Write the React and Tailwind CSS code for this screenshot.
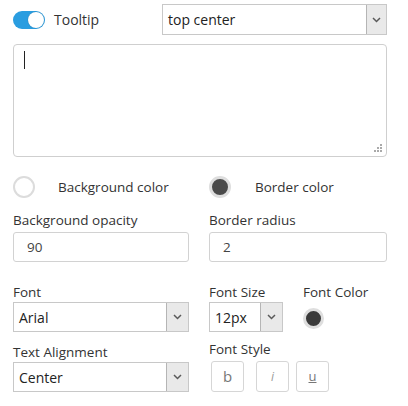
import React from "react";

const font = { fontFamily: '"Open Sans", "Liberation Sans", sans-serif' };

function Chevron() {
  return (
    <svg width="9" height="6" viewBox="0 0 9 6" fill="none">
      <path d="M1 1 L4.5 4.5 L8 1" stroke="#5a5a5a" strokeWidth="1.5" />
    </svg>
  );
}

function Select({ value, className, arrowClass = "w-[21px]" }) {
  return (
    <div className={`flex border border-[#c8c8c8] bg-white ${className}`}>
      <div className="flex-1 flex items-center pl-[5px] text-[14px] text-[#222]">{value}</div>
      <div className={`${arrowClass} flex items-center justify-center bg-[#e9e9e9] border-l border-[#b5b5b5]`}>
        <Chevron />
      </div>
    </div>
  );
}

function Label({ children, className = "" }) {
  return <div className={`h-[20px] leading-[20px] text-[13.5px] text-[#333] ${className}`}>{children}</div>;
}

function Input({ value }) {
  return (
    <div className="h-[30px] flex items-center pl-[13px] border border-[#d2d2d2] rounded-[3px] text-[13.5px] text-[#444] bg-white">
      {value}
    </div>
  );
}

function StyleButton({ children, className = "" }) {
  return (
    <div className={`w-[33px] h-[31px] flex items-center justify-center border border-[#d6d6d6] rounded-[3px] bg-white text-[#777] ${className}`}>
      {children}
    </div>
  );
}

export default function App() {
  return (
    <div className="w-[408px] h-[406px] bg-white pl-[13px] pt-[4px] overflow-hidden" style={font}>
      {/* header: toggle + position select */}
      <div className="flex h-[31px] items-center">
        <div className="w-[149px] flex items-center">
          <div className="relative w-[32px] h-[18px] rounded-full bg-[#2a9de0]">
            <div className="absolute right-[1px] top-[1px] w-[16px] h-[16px] rounded-full bg-white shadow-[0_0_1px_rgba(0,0,0,0.3)]" />
          </div>
          <span className="ml-[9px] text-[14px] text-[#333]">Tooltip</span>
        </div>
        <Select value="top center" className="w-[225px] h-[31px]" arrowClass="w-[20px]" />
      </div>

      {/* tooltip text */}
      <div className="relative mt-[9px] w-[374px] h-[113px] border border-[#cfcfcf] rounded-[4px] bg-white">
        <div className="absolute left-[10px] top-[6px] w-px h-[18px] bg-[#222]" />
        <svg className="absolute right-[3px] bottom-[3px]" width="9" height="9" viewBox="0 0 9 9">
          <rect x="6" y="0" width="2" height="2" fill="#aaa" />
          <rect x="3" y="3" width="2" height="2" fill="#aaa" />
          <rect x="6" y="3" width="2" height="2" fill="#aaa" />
          <rect x="0" y="6" width="2" height="2" fill="#aaa" />
          <rect x="3" y="6" width="2" height="2" fill="#aaa" />
          <rect x="6" y="6" width="2" height="2" fill="#aaa" />
        </svg>
      </div>

      {/* colors */}
      <div className="flex mt-[19px] h-[22px] items-center">
        <div className="w-[196px] flex items-center">
          <div className="w-[22px] h-[22px] rounded-full border-2 border-[#dcdcdc] bg-white" />
          <span className="ml-[23px] text-[13.5px] text-[#333]">Background color</span>
        </div>
        <div className="flex items-center">
          <div className="w-[22px] h-[22px] rounded-full border-[3px] border-[#dedede] bg-[#4a4a4a]" />
          <span className="ml-[24px] text-[13.5px] text-[#333]">Border color</span>
        </div>
      </div>

      {/* opacity / radius */}
      <div className="flex mt-[12px] gap-[20px]">
        <div className="w-[176px]">
          <Label className="mb-[2px]">Background opacity</Label>
          <Input value="90" />
        </div>
        <div className="w-[178px]">
          <Label className="mb-[2px]">Border radius</Label>
          <Input value="2" />
        </div>
      </div>

      {/* font row */}
      <div className="flex mt-[20px]">
        <div className="w-[176px]">
          <Label>Font</Label>
          <Select value="Arial" className="h-[30px]" arrowClass="w-[22px]" />
        </div>
        <div className="w-[74px] ml-[20px]">
          <Label>Font Size</Label>
          <Select value="12px" className="h-[30px]" arrowClass="w-[22px]" />
        </div>
        <div className="ml-[20px]">
          <Label>Font Color</Label>
          <div className="mt-[6px] w-[21px] h-[21px] rounded-full border-[3px] border-[#dedede] bg-[#3a3a3a]" />
        </div>
      </div>

      {/* alignment / style */}
      <div className="flex mt-[10px]">
        <div className="w-[176px]">
          <Label>Text Alignment</Label>
          <Select value="Center" className="h-[30px]" arrowClass="w-[22px]" />
        </div>
        <div className="ml-[20px] -mt-[3px]">
          <Label className="mb-[2px]">Font Style</Label>
          <div className="flex ml-[2px]">
            <StyleButton className="text-[15px]">b</StyleButton>
            <StyleButton className="ml-[12px] text-[12px] italic text-[#999]">i</StyleButton>
            <StyleButton className="ml-[7px] text-[13px] underline">u</StyleButton>
          </div>
        </div>
      </div>
    </div>
  );
}
